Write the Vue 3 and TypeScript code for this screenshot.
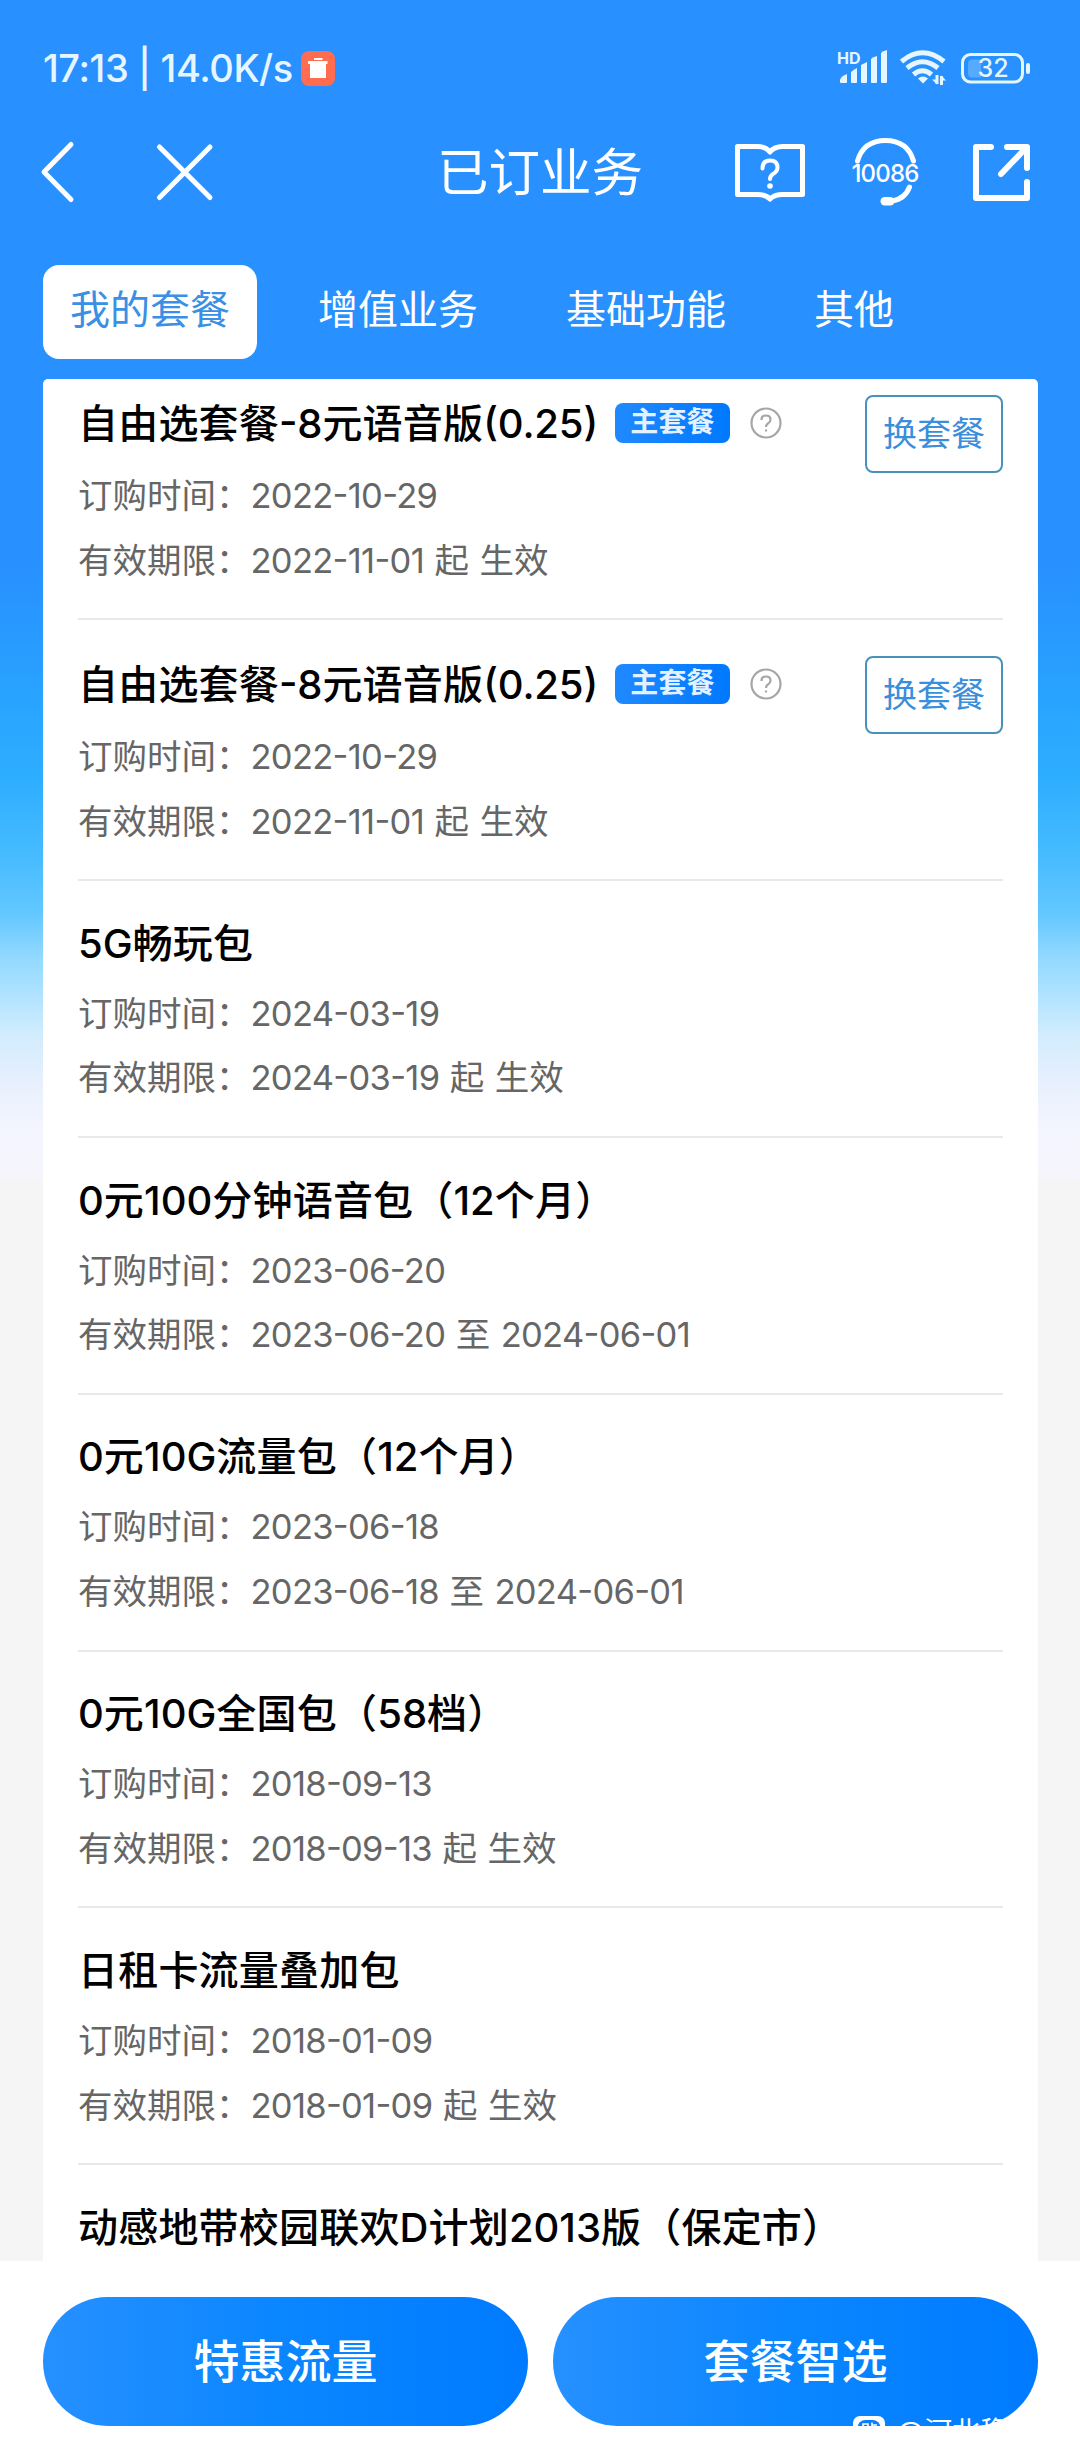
<script setup lang="ts">
interface Plan {
  name: string
  ordered: string
  valid: string
  main?: boolean
}

interface Run {
  text: string
  latin: boolean
}

const tabs: string[] = ['我的套餐', '增值业务', '基础功能', '其他']
const actions: string[] = ['特惠流量', '套餐智选']

const plans: Plan[] = [
  { name: '自由选套餐-8元语音版(0.25)', ordered: '2022-10-29', valid: '2022-11-01 起 生效', main: true },
  { name: '自由选套餐-8元语音版(0.25)', ordered: '2022-10-29', valid: '2022-11-01 起 生效', main: true },
  { name: '5G畅玩包', ordered: '2024-03-19', valid: '2024-03-19 起 生效' },
  { name: '0元100分钟语音包（12个月）', ordered: '2023-06-20', valid: '2023-06-20 至 2024-06-01' },
  { name: '0元10G流量包（12个月）', ordered: '2023-06-18', valid: '2023-06-18 至 2024-06-01' },
  { name: '0元10G全国包（58档）', ordered: '2018-09-13', valid: '2018-09-13 起 生效' },
  { name: '日租卡流量叠加包', ordered: '2018-01-09', valid: '2018-01-09 起 生效' },
  { name: '动感地带校园联欢D计划2013版（保定市）', ordered: '', valid: '' },
]

// Latin and CJK runs get their own tracking.
function runs(text: string): Run[] {
  return (text.match(/[\x20-\x7e]+|[^\x20-\x7e]+/g) ?? []).map((t) => ({
    text: t,
    latin: /^[\x20-\x7e]/.test(t),
  }))
}
</script>

<template>
  <div class="page">
    <header class="status">
      <span class="clock">17:13 | 14.0K/s</span>
      <svg class="trash" width="34" height="35" viewBox="0 0 34 35">
        <rect width="34" height="35" rx="8" fill="#ff6c4f" />
        <path d="M13 7h8.500v2H13z M7 10h19.500v3H25v14H9V13H7z" fill="#fff" />
      </svg>
      <span class="grow"></span>
      <svg class="signal" width="52" height="36" viewBox="0 0 52 36">
        <text x="-1" y="13.500" class="hd">HD</text>
        <g fill="#e6f6ff">
          <path d="M2 32v-2q1-4 7-6v8q0 1-1 1H3q-1 0-1-1z" />
          <path d="M13 32V22q2-2 6-4v14q0 1-1 1h-4q-1 0-1-1z" />
          <path d="M23 32V15l6-3v20q0 1-1 1h-4q-1 0-1-1z" />
          <path d="M33 32V9q2-2 6-3v26q0 1-1 1h-4q-1 0-1-1z" />
          <path d="M43 32V3q2-2 6-3v32q0 1-1 1h-4q-1 0-1-1z" />
        </g>
      </svg>
      <svg class="wifi" width="46" height="36" viewBox="0 0 46 36">
        <g fill="none" stroke="#e6f6ff" stroke-width="5">
          <path d="M1.500 11.500Q22.500-6 44 11.500" />
          <path d="M7 18Q22.500 5.500 38 18" />
          <path d="M13.500 24.500Q22.500 17 31.500 24.500" />
        </g>
        <path d="M18 28.500q5-4 10 0l-5 5z" fill="#e6f6ff" />
        <path d="M37 25v9M41.500 35v-9" fill="none" stroke="#e6f6ff" stroke-width="3" />
        <path d="M32 29.500 37 34.500v-5zM46 30.500 41.500 25.500v5z" fill="#e6f6ff" />
      </svg>
      <svg class="battery" width="70" height="31" viewBox="0 0 70 31">
        <rect x="1.500" y="1.500" width="60" height="27.500" rx="8" fill="none" stroke="#e6f6ff" stroke-width="3" />
        <path d="M11 6.500h9v18h-9q-4 0-4-4v-10q0-4 4-4z" fill="#55abff" />
        <rect x="65" y="10" width="4" height="11" rx="2" fill="#e6f6ff" />
        <text x="32" y="24" text-anchor="middle" class="level">32</text>
      </svg>
    </header>

    <nav class="nav">
      <svg class="back" width="36" height="64" viewBox="0 0 36 64">
        <path d="M31 4.500 4 32l27 27.500" class="line" />
      </svg>
      <svg class="close" width="60" height="60" viewBox="0 0 60 60">
        <path d="M4.500 5 55 55.500M55 5 4.500 55.500" class="line" />
      </svg>
      <h1 class="heading">已订业务</h1>
      <svg class="book" width="70" height="60" viewBox="0 0 70 60">
        <path d="M2.500 4.500h20q8 0 12.500 5.500 4.500-5.500 12.500-5.500h20v48h-20q-8 0-12.500 4.500-4.500-4.500-12.500-4.500h-20z" class="line" />
        <path d="M27.500 26.500q0-8 7.500-8t7.500 7q0 4-4.500 6.500-3 2-3 5" class="line thin" />
        <circle cx="35" cy="44" r="2.800" fill="#fff" />
      </svg>
      <svg class="service" width="72" height="72" viewBox="0 0 72 72">
        <path d="M7.500 25Q13.500 4.500 35.500 4.500t28 20.500" class="line" />
        <text x="35" y="46" text-anchor="middle" class="hotline">10086</text>
        <path d="M59.500 51Q55 63 42 65" class="line" />
        <rect x="30.500" y="61" width="14" height="8.500" rx="4.200" fill="#fff" />
      </svg>
      <svg class="share" width="58" height="58" viewBox="0 0 58 58">
        <path d="M18 4H3v51h51V39" class="line wide" />
        <path d="M34 4h20v21M52 6 28 31" class="line wide" />
      </svg>
    </nav>

    <div class="tabs">
      <span v-for="(tab, i) in tabs" :key="tab" class="tab" :class="{ active: i === 0 }">{{ tab }}</span>
    </div>

    <main class="card">
      <section v-for="(plan, i) in plans" :key="i" class="plan" :class="{ main: plan.main, first: i === 0 }">
        <div class="info">
          <h2 class="name">
            <span class="label"><span v-for="(r, k) in runs(plan.name)" :key="k" :class="{ latin: r.latin }">{{ r.text }}</span></span>
            <template v-if="plan.main">
              <span class="badge">主套餐</span>
              <svg width="32" height="32" viewBox="0 0 32 32" class="help">
                <circle cx="16" cy="16" r="14.500" />
                <path d="M11.500 13q0-4.500 4.500-4.500t4.500 4q0 2.500-2.500 4-2 1.200-2 3.500" />
                <path d="M16 22.500v2" />
              </svg>
            </template>
          </h2>
          <template v-if="plan.ordered">
            <p class="detail">订购时间：<span class="latin">{{ plan.ordered }}</span></p>
            <p class="detail">有效期限：<span v-for="(r, k) in runs(plan.valid)" :key="k" :class="{ latin: r.latin }">{{ r.text }}</span></p>
          </template>
        </div>
        <button v-if="plan.main" class="switch">换套餐</button>
      </section>
    </main>

    <footer class="bar">
      <div v-for="a in actions" :key="a" class="action">{{ a }}</div>
      <div class="watermark">
        <svg width="32" height="10" viewBox="0 0 32 10">
          <rect width="32" height="32" rx="7" fill="#fff" />
          <rect x="4.500" y="4" width="23" height="24" rx="8" fill="#087fff" />
          <path d="M10 14V8h5v6M19 6.500V12M19 9h5" fill="none" stroke="#fff" stroke-width="1.600" />
        </svg>
        <span>@河北稳</span>
      </div>
    </footer>
  </div>
</template>

<style>
body {
  margin: 0;
}
</style>

<style scoped>
.page {
  width: 1080px;
  height: 2460px;
  display: flex;
  flex-direction: column;
  overflow: hidden;
  font-family: Inter, "Noto Sans CJK SC", sans-serif;
  background: linear-gradient(
    #2890ff 0, #2890ff 550px, #2898ff 620px, #28a4ff 700px, #2eaeff 780px, #48bcff 860px,
    #64c8ff 915px, #90d8ff 955px, #b4e4ff 1000px, #d2ecfd 1035px, #e8f0fd 1085px,
    #f4f5fe 1130px, #f6f5fe 1175px, #f5f5f5 1182px
  );
}

.status {
  height: 136px;
  padding: 0 49px 0 43px;
  display: flex;
  align-items: center;
  box-sizing: border-box;
}

.clock {
  width: 251px;
  font-size: 38px;
  font-weight: 500;
  letter-spacing: -0.400px;
  color: #e6f6ff;
  white-space: pre;
}

.trash {
  margin-left: 7px;
}

.grow {
  flex: 1;
}

.signal {
  margin-right: 10px;
  overflow: visible;
}

.wifi {
  margin-right: 15px;
}

.hd {
  font-size: 16px;
  font-weight: 700;
  fill: #e6f6ff;
}

.level {
  font-size: 25px;
  font-weight: 500;
  fill: #e6f6ff;
}

.nav {
  height: 72px;
  display: flex;
  align-items: center;
  padding: 0 49px 0 40px;
}

.line {
  fill: none;
  stroke: #fff;
  stroke-width: 5;
  stroke-linecap: round;
  stroke-linejoin: round;
}

.thin {
  stroke-width: 4;
}

.wide {
  stroke-width: 6;
}

.close {
  margin-left: 79px;
}

.heading {
  margin: 0 auto 0 222px;
  font-size: 51.500px;
  font-weight: 400;
  line-height: 70px;
  color: #fff;
}

.book {
  margin-right: 45px;
}

.service {
  margin-right: 51px;
}

.hotline {
  font-size: 24px;
  font-weight: 500;
  letter-spacing: -0.800px;
  fill: #fff;
}

.tabs {
  height: 94px;
  margin: 57px 0 20px 43px;
  display: flex;
  gap: 34px;
}

.tab {
  padding: 0 27px;
  font-size: 40px;
  line-height: 90px;
  color: #fff;
}

.tab.active {
  background: #fff;
  color: #3a90e4;
  border-radius: 16px;
}

.card {
  height: 1882px;
  margin: 0 42px 0 43px;
  padding: 0 35px;
  background: #fff;
  border-radius: 5px 5px 0 0;
  overflow: hidden;
}

.plan {
  display: flex;
  justify-content: space-between;
  align-items: flex-start;
  box-sizing: border-box;
  height: 256.850px;
  padding-top: 32.700px;
  border-bottom: 2px solid #e9e9e9;
}

.plan.main {
  height: 261px;
  padding-top: 35px;
}

.plan.main.first {
  height: 241px;
  padding-top: 15px;
}

.name {
  margin: 0 0 8px;
  display: flex;
  align-items: center;
  height: 60px;
  font-size: 40px;
  font-weight: 500;
  line-height: 60px;
  letter-spacing: 0.200px;
  color: #000;
  white-space: nowrap;
}

.plan.main .name {
  margin-bottom: 10px;
}

.name .latin {
  letter-spacing: 0;
}

.plan.main .name .latin {
  letter-spacing: -0.150px;
}

.latin {
  letter-spacing: -0.700px;
  word-spacing: 1.500px;
  font-feature-settings: "case";
}

.badge {
  width: 115px;
  height: 40px;
  margin: 0 20px 3px 17px;
  border-radius: 8px;
  background: linear-gradient(90deg, #2089ff, #0079ff);
  color: #e4f2ff;
  font-size: 28px;
  font-weight: 700;
  line-height: 39px;
  text-align: center;
}

.help {
  margin-bottom: 3px;
  fill: none;
  stroke: #a6a6a6;
  stroke-width: 2.200;
}

.detail {
  margin: 0;
  font-size: 34.500px;
  line-height: 64.500px;
  color: #666;
  white-space: pre;
}

.switch {
  width: 138px;
  height: 78px;
  margin-top: 0.500px;
  padding: 0 0 5px;
  box-sizing: border-box;
  border: 2px solid #4a90bd;
  border-radius: 8px;
  background: #fff;
  color: #3a8edc;
  font-family: inherit;
  font-size: 34px;
}

.bar {
  position: relative;
  flex: 1;
  display: flex;
  align-items: flex-start;
  gap: 25px;
  padding: 36px 42px 0 43px;
  background: #fff;
}

.action {
  flex: 1;
  height: 129px;
  border-radius: 65px;
  background: linear-gradient(90deg, #2690ff, #0a86ff 50%, #007bff);
  color: #fff;
  font-size: 46px;
  font-weight: 500;
  line-height: 128px;
  text-align: center;
}

.watermark {
  position: absolute;
  left: 853px;
  top: 155px;
  display: flex;
  gap: 12px;
  font-size: 28px;
  line-height: 32px;
  color: #fff;
}
</style>
